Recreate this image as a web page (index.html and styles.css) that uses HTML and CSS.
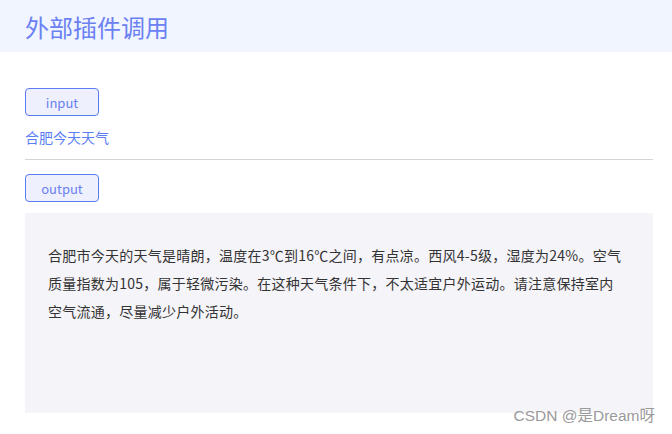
FILE: index.html
```html
<!DOCTYPE html>
<html lang="zh">
<head>
  <meta charset="UTF-8">
  <meta name="viewport" content="width=device-width, initial-scale=1.0">
  <title>外部插件调用</title>
  <link rel="stylesheet" href="styles.css">
</head>
<body>
  <header class="page-head">
    <h1>外部插件调用</h1>
  </header>

  <main class="content">
    <button class="tag-btn">input</button>
    <p class="query">合肥今天天气</p>
    <hr class="divider">
    <button class="tag-btn">output</button>
    <div class="answer">
      <p>合肥市今天的天气是晴朗，温度在3℃到16℃之间，有点凉。西风4-5级，湿度为24%。空气质量指数为105，属于轻微污染。在这种天气条件下，不太适宜户外运动。请注意保持室内空气流通，尽量减少户外活动。</p>
    </div>
  </main>

  <span class="watermark">CSDN @是Dream呀</span>
</body>
</html>
```

FILE: styles.css
```css
body {
  margin: 0;
  font-family: "Noto Sans CJK SC", "Noto Sans", sans-serif;
  background: #fff;
  position: relative;
  height: 434px;
  overflow: hidden;
}
.page-head {
  background: #f0f5ff;
  height: 52px;
  padding-left: 25px;
  display: flex;
  align-items: center;
}
.page-head h1 {
  margin: 0;
  font-size: 24px;
  font-weight: 400;
  color: #6b80f2;
}
.content {
  padding: 36px 19px 0 25px;
  display: flex;
  flex-direction: column;
  align-items: flex-start;
}
.tag-btn {
  width: 74px;
  height: 28px;
  border: 1px solid #5b7bf0;
  border-radius: 4px;
  background: #eef1fd;
  color: #6b80f2;
  font-family: "Noto Sans CJK SC", "Noto Sans", sans-serif;
  font-size: 13px;
  padding: 0;
}
.query {
  margin: 10px 0 0;
  font-size: 14px;
  line-height: 22px;
  color: #5b7ef5;
}
.divider {
  align-self: stretch;
  border: none;
  border-top: 1px solid #d4d4d4;
  margin: 11px 0 14px;
}
.answer {
  align-self: stretch;
  margin-top: 11px;
  background: #f5f4f9;
  height: 200px;
  box-sizing: border-box;
  padding: 28px 29px 0 23px;
}
.answer p {
  margin: 0;
  font-size: 14px;
  line-height: 28px;
  letter-spacing: 0.25px;
  color: #333;
}
.watermark {
  position: absolute;
  right: 17px;
  top: 403px;
  font-family: "Liberation Sans", "Noto Sans CJK SC", sans-serif;
  font-size: 15.5px;
  color: #9a9a9a;
}
```
